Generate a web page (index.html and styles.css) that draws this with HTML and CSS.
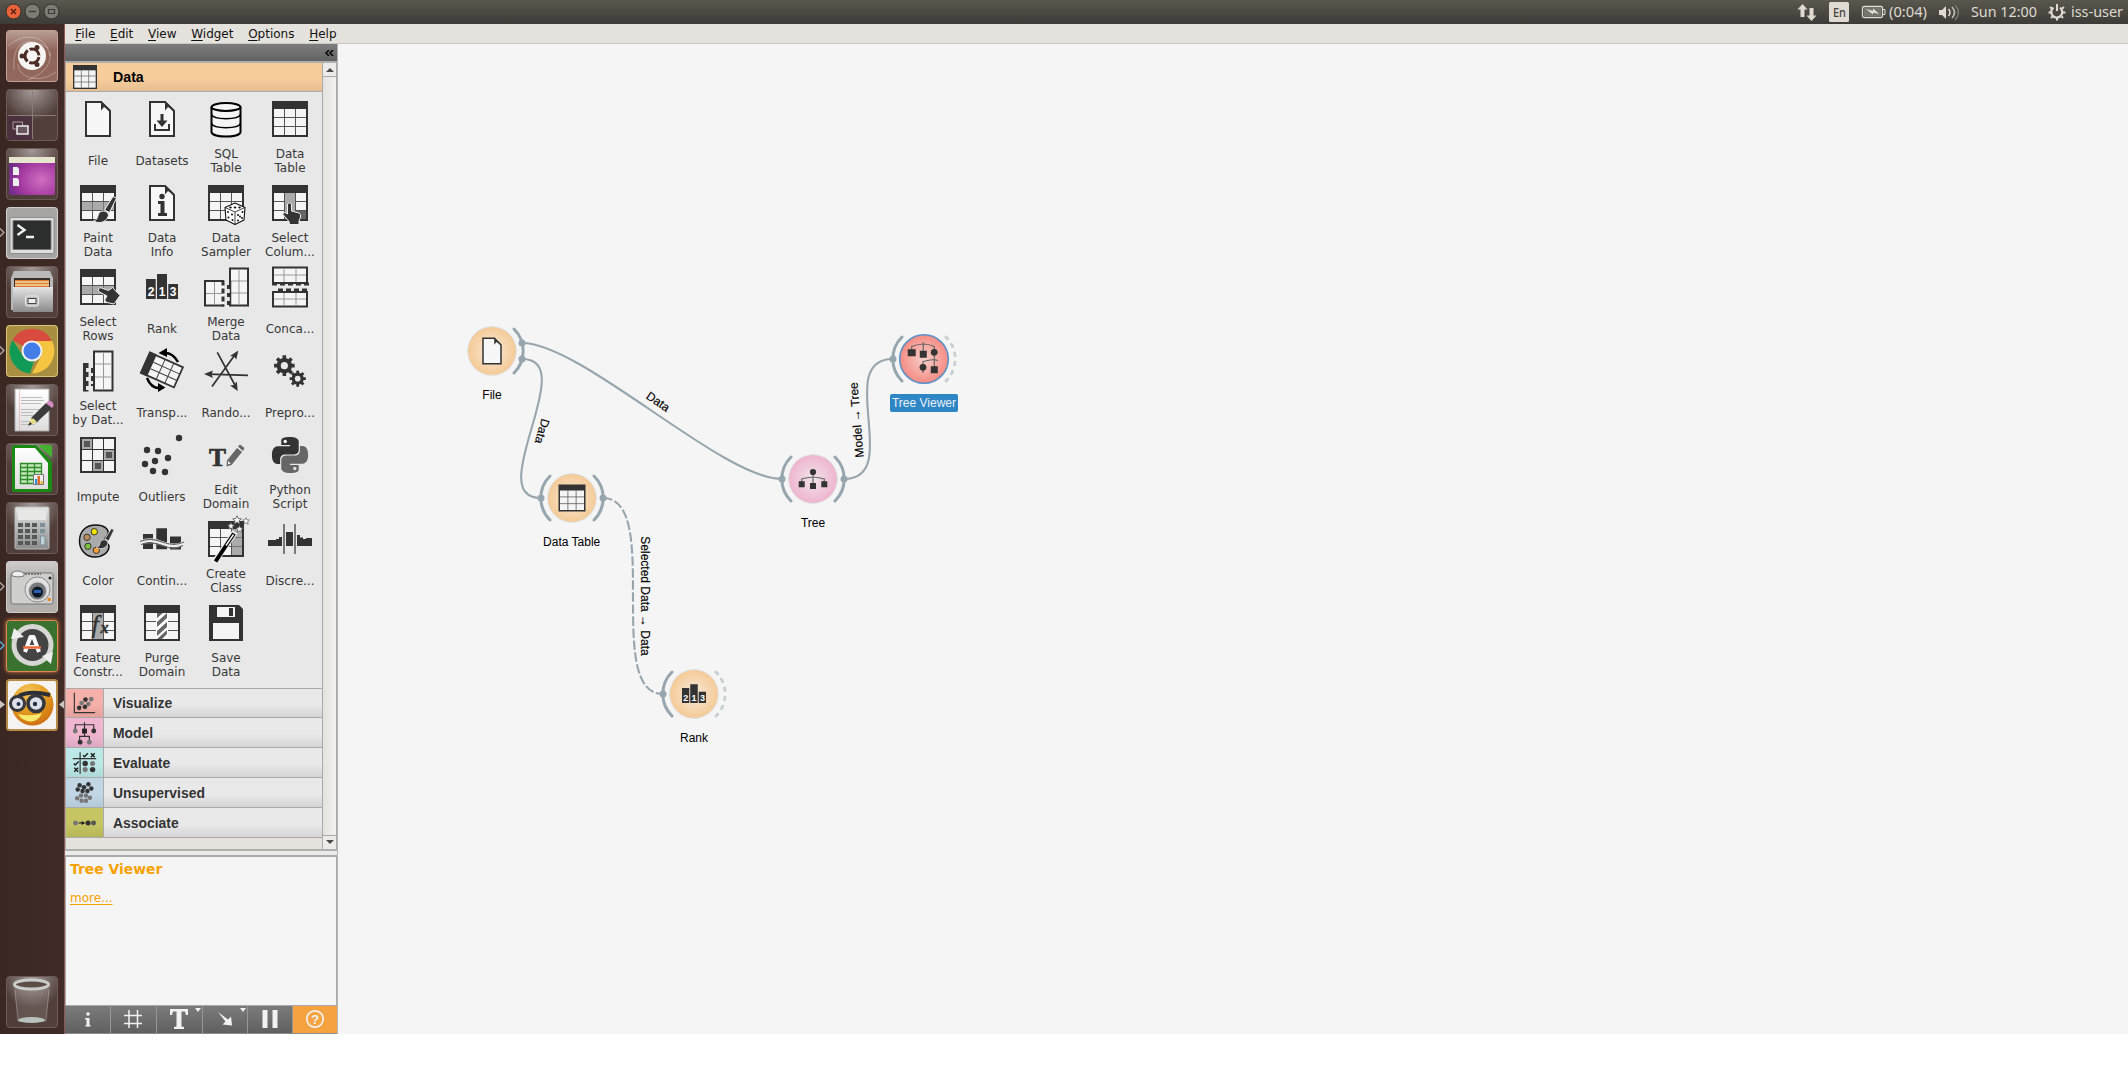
FILE: index.html
```html
<!DOCTYPE html>
<html lang="en">
<head>
<meta charset="utf-8">
<title>Orange Canvas</title>
<link rel="stylesheet" href="styles.css">
</head>
<body>
<svg class="defs" width="0" height="0" aria-hidden="true">
  <defs>
    <linearGradient id="gloss" x1="0" y1="0" x2="0" y2="1"><stop offset="0" stop-color="#fff" stop-opacity=".42"/><stop offset=".4" stop-color="#fff" stop-opacity=".08"/><stop offset="1" stop-color="#fff" stop-opacity=".1"/></linearGradient>
    <radialGradient id="shine" cx=".5" cy="0" r=".62"><stop offset="0" stop-color="#fff" stop-opacity=".48"/><stop offset="1" stop-color="#fff" stop-opacity="0"/></radialGradient>
    <linearGradient id="silver" x1="0" y1="0" x2="0" y2="1"><stop offset="0" stop-color="#e4e4e4"/><stop offset="1" stop-color="#8b8b8b"/></linearGradient>
    <linearGradient id="paper" x1="0" y1="0" x2="0" y2="1"><stop offset="0" stop-color="#fff"/><stop offset="1" stop-color="#dcdcdc"/></linearGradient>
    <radialGradient id="violet" cx=".7" cy=".6" r=".8"><stop offset="0" stop-color="#cf6fc0"/><stop offset=".6" stop-color="#a2389f"/><stop offset="1" stop-color="#682a83"/></radialGradient>
    <radialGradient id="orangeball" cx=".4" cy=".2" r=".9"><stop offset="0" stop-color="#f5c35a"/><stop offset=".5" stop-color="#e39a1e"/><stop offset="1" stop-color="#c9660e"/></radialGradient>
    <radialGradient id="nodeData"><stop offset="0" stop-color="#f6eadb"/><stop offset="1" stop-color="#f5ca96"/></radialGradient>
    <radialGradient id="nodeModel"><stop offset="0" stop-color="#f1e4ea"/><stop offset="1" stop-color="#eeb4cf"/></radialGradient>
    <radialGradient id="nodeViz"><stop offset="0" stop-color="#f7cfcb"/><stop offset="1" stop-color="#f58c83"/></radialGradient>

    <symbol id="table" viewBox="0 0 48 48"><path fill="#333" d="M6 6h36v36H6z"/><path fill="#f5f5f5" d="M8 14h32v26H8z"/><path stroke="#555" d="M18.500 14v26M29.500 14v26M8 22.500h32M8 31.500h32"/></symbol>
    <symbol id="doc" viewBox="0 0 48 48"><path fill="#f7f7f7" stroke="#333" stroke-width="2" d="M12 7h15l9 9v25H12z"/><path fill="#333" d="M27 6v9.500l3-3.500 7 3.500z"/></symbol>
    <symbol id="rank" viewBox="0 0 48 48"><path fill="#333" d="M8 16h9.700v20H8zM19 11h10v25H19zM30.300 21H40v15h-9.700z"/><g fill="#fff" font-family="Liberation Sans, sans-serif" font-weight="bold" font-size="12" text-anchor="middle"><text x="13" y="33">2</text><text x="24" y="33">1</text><text x="35.200" y="33">3</text></g></symbol>
    <symbol id="star" viewBox="-10 -10 20 20"><path fill="#f5f5f5" stroke="#555" stroke-width="1.600" d="M0-8.500 2.600-3 8.500-2.500 4 1.700 5.500 8 0 4.700-5.500 8-4 1.700-8.500-2.500-2.600-3z"/></symbol>
    <symbol id="brush" viewBox="0 0 24 28"><g stroke="#f0f0f0" stroke-width="1"><path fill="#333" d="M20 .5 23.500 2 16.500 16.500 11.500 14z"/><path fill="#333" d="M10.500 15c3 0 5 2 5 4.500-1 4-4 6.500-8 7-3 .3-5-.5-7-1.500 4-1 4-4 5-7 1-2 2.500-3 5-3z"/></g></symbol>
    <symbol id="gear" viewBox="-12 -12 24 24"><circle r="6.300" fill="none" stroke="#333" stroke-width="4.600"/><path stroke="#333" stroke-width="4" d="M0-11.500V-7M0 7v4.500M-11.500 0H-7M7 0h4.500M-8.100-8.100-5-5M5 5l3.100 3.100M-8.100 8.100-5 5M5-5l3.100-3.100"/></symbol>
    <symbol id="tile" viewBox="0 0 52 52"><rect x=".5" y=".5" width="51" height="51" rx="3.500" fill="#fff" fill-opacity=".1" stroke="#fff" stroke-opacity=".2"/><rect x="1" y="1" width="50" height="50" rx="3" fill="url(#shine)"/></symbol>
  </defs>
</svg>

<header class="panel">
  <svg class="window-buttons" width="66" height="24" viewBox="0 0 66 24">
    <circle cx="13.500" cy="11.500" r="7.500" fill="#e9633a" stroke="#33312c"/><path d="m11 9 5 5m0-5-5 5" stroke="#5c2411" stroke-width="1.500"/>
    <circle cx="32.500" cy="11.500" r="7.500" fill="#7d7b74" stroke="#33312c"/><path d="M29 11.500h7" stroke="#3c3b37" stroke-width="1.300"/>
    <circle cx="51.500" cy="11.500" r="7.500" fill="#7d7b74" stroke="#33312c"/><path d="M48.500 9.500h6v4h-6z" fill="none" stroke="#3c3b37" stroke-width="1.200"/>
  </svg>
  <svg class="tray" width="348" height="24" viewBox="0 0 348 24">
    <g fill="#dfdbd2">
      <path d="M22.500 4 27.500 9.500h-3V17h-4V9.500h-3zM31.500 21l-5-5.500h3V8h4v7.500h3z"/>
      <rect x="49" y="2" width="20" height="20" rx="1.500"/>
      <path d="M159 10h3l4-4v13l-4-4h-3z"/>
      <path d="M168.500 9q3 3.500 0 7" fill="none" stroke="#dfdbd2" stroke-width="1.500"/>
      <path d="M172 7q5 5.500 0 11" fill="none" stroke="#c2beb6" stroke-width="1.500"/>
      <path d="M175 5q7 7.500 0 15" fill="none" stroke="#77756e" stroke-width="1.500"/>
    </g>
    <rect x="82.500" y="6.500" width="20" height="11" rx="1.500" fill="none" stroke="#dfdbd2" stroke-width="1.300"/><path d="M103 9.500h2v5h-2" fill="none" stroke="#dfdbd2"/><path fill="#77756e" d="M84 8h17v8H84z"/><path fill="#e8e5de" d="m86 9 7 2V8.500l6 5.500-6-1.500v2z"/>
    <g fill="none" stroke="#dfdbd2"><path stroke-width="2.200" d="M273.500 7.600a5.500 5.500 0 1 0 6.500 0"/><path stroke-width="2" d="M277 4v7M270 7l1.800 1.500M284 7l-1.800 1.500M268.500 12.500h2.500M283 12.500h2.500M271 18l1.500-1.500M283 18l-1.500-1.500M277 18v2.500"/></g>
    <text class="lang" x="53" y="17" textLength="13" lengthAdjust="spacingAndGlyphs">En</text>
    <g class="tray-text">
      <text x="109" y="17" textLength="38" lengthAdjust="spacingAndGlyphs">(0:04)</text>
      <text x="191" y="17" textLength="66" lengthAdjust="spacingAndGlyphs">Sun 12:00</text>
      <text x="291" y="17" textLength="52" lengthAdjust="spacingAndGlyphs">iss-user</text>
    </g>
  </svg>
</header>

<div class="desktop">
<nav class="launcher">
  <svg class="app" viewBox="0 0 52 52"><rect width="52" height="52" rx="4" fill="#87584b"/><rect x=".5" y=".5" width="51" height="51" rx="3.500" fill="url(#gloss)" stroke="#c3a094"/><path d="M2 16C18 2 40 4 44 26M8 40C6 10 22 6 42 18M12 34c0 14 22 20 38 8M44 22c2 14-8 22-22 28" fill="none" stroke="#fff" stroke-opacity=".3"/><circle cx="26" cy="26" r="14" fill="#f7f5f3"/><circle cx="26" cy="26" r="7" fill="none" stroke="#4a2c25" stroke-width="3" stroke-dasharray="12.660 2" stroke-dashoffset="-1"/><g fill="#4a2c25"><circle cx="16" cy="26" r="2.500"/><circle cx="31" cy="17.500" r="2.500"/><circle cx="31" cy="34.500" r="2.500"/></g></svg>
  <svg class="app" viewBox="0 0 52 52"><use href="#tile"/><path fill="#4a2c40" fill-opacity=".7" d="M1 27h25v24H1z"/><path stroke="#8a7b75" d="M26.500 2v48M2 26.500h48"/><path d="M7 33h9.500v7H7z" fill="none" stroke="#a99ca5"/><path d="M11 37h11v8H11z" fill="#6b5561" stroke="#eee" stroke-width="1.500"/></svg>
  <svg class="app" viewBox="0 0 52 52"><use href="#tile"/><rect x="3" y="9" width="46" height="38" rx="1" fill="url(#violet)"/><path fill="#e6e6cf" d="M3 9h46v6H3z"/><path fill="#eee" d="M7 19h4.500l1.500 2v6H7zM7 30h4.500l1.500 2v6H7z"/></svg>
  <svg class="app" viewBox="0 0 52 52"><rect width="52" height="52" rx="4" fill="#a6a5a4"/><rect x=".5" y=".5" width="51" height="51" rx="3.500" fill="none" stroke="#cfcfcf"/><rect x="4" y="10.500" width="44" height="36" rx="1.500" fill="#dedede" stroke="#8a8a8a"/><path fill="#2c2e2e" stroke="#777" d="M7 13.500h38v29H7z"/><path fill="none" stroke="#f1f1f1" stroke-width="2.400" d="m11.500 18 7 5-7 5M20 30h8"/></svg>
  <svg class="app" viewBox="0 0 52 52"><use href="#tile"/><path fill="#b9b9b9" d="M8 5h36l3 7v32H5V12z"/><path fill="#33302e" d="M8 12h36v9H8z"/><path fill="#dd7a34" d="M9 14h34v7H9z"/><path stroke="#f3d8a0" stroke-width="1.500" d="M9 16h34M9 19h34"/><path fill="url(#silver)" d="M7 21h40v25H7z"/><rect x="19.500" y="30" width="13" height="10" rx="2" fill="#bbb" stroke="#eee"/><path fill="#eee" stroke="#444" d="M22 32.500h8v5h-8z"/></svg>
  <svg class="app" viewBox="0 0 52 52"><rect width="52" height="52" rx="4" fill="#a88e40"/><rect x=".5" y=".5" width="51" height="51" rx="3.500" fill="none" stroke="#d8c579"/><path fill="#d84b3e" d="M26 26 6.500 15A22.500 22.500 0 0 1 45.500 15z"/><path fill="#f5c541" d="M26 16h20A22.500 22.500 0 0 1 26 48.500l9.500-18z"/><path fill="#129b57" d="M6.500 15 17 31l11 5-4 12.500A22.500 22.500 0 0 1 6.500 15z"/><circle cx="26" cy="26" r="10.500" fill="#f1f1f1"/><circle cx="26" cy="26" r="8.500" fill="#447de8"/></svg>
  <svg class="app" viewBox="0 0 52 52"><use href="#tile"/><path fill="url(#paper)" stroke="#aaa" d="M9 5h34v42H9z"/><path stroke="#bbb" d="M15 13.500h21M15 16.500h23M15 19.500h20M15 25.500h20M15 28.500h12M15 31.500h12M15 37.500h18M15 40.500h14"/><path stroke="#e8a4a4" stroke-opacity=".6" d="M13.500 6v40"/><path fill="#3b3b3b" d="m40 19 6 5-16 15-5-5z"/><path fill="#d58ac4" d="m40 19 3-2.500q5 1 4.500 5.500L46 24z"/><path fill="#e8dd8c" d="m25 34 5 5-6 1.500-1.500-1z"/><path fill="#e8dd8c" d="m23 41 4-7 4 4z"/><path fill="#222" d="m22 42 2-4 2 2z"/></svg>
  <svg class="app" viewBox="0 0 52 52"><use href="#tile"/><path fill="#1a8a13" d="M8 2h22l16 17v28q0 2-2 2H8q-2 0-2-2V4q0-2 2-2z"/><path fill="#45b02f" d="M32 2h12q2 0 2 2v11z"/><path fill="url(#paper)" d="M9 5h20l13 15v26H9z"/><path fill="#c4e6bb" stroke="#2c8c25" stroke-width="1.300" d="M14.500 20.500h21v20h-21zM14.500 24.500h21M14.500 28.500h21M14.500 32.500h21M14.500 36.500h21M21.500 20v20M28.500 20v20"/><path fill="#eee" stroke="#777" d="M27.500 31.500h10v10h-10z"/><path fill="#2c90d8" d="M29 36h2.300v5H29z"/><path fill="#e2682b" d="M31.500 33H34v8h-2.500z"/><path fill="#e7b927" d="M34.500 38h2.300v3h-2.300z"/></svg>
  <svg class="app" viewBox="0 0 52 52"><use href="#tile"/><rect x="9" y="5" width="34" height="42" rx="1.500" fill="url(#silver)" stroke="#bbb"/><path fill="#e7e8e5" d="M12 8h28v10H12z"/><path stroke="#555856" stroke-width="4" stroke-dasharray="5 2" d="M12 23h20M12 29h20M12 35h20M12 41h20"/><path stroke="#7d8f97" stroke-width="4" d="M34 23h5M34 29h5"/><path fill="#c0d0d6" stroke="#7d8f97" d="M34.500 34h4.500v9h-4.500z"/></svg>
  <svg class="app" viewBox="0 0 52 52"><rect width="52" height="52" rx="4" fill="#aaa6a3"/><rect x=".5" y=".5" width="51" height="51" rx="3.500" fill="url(#gloss)" stroke="#cfcdcb"/><rect x="5" y="12" width="42" height="31" rx="2" fill="#cfcfcd" stroke="#747472"/><path fill="#eee" stroke="#777" d="M6 12q5-4 12 0v3q-6 2-12 0z"/><path stroke="#777" stroke-width="2" stroke-dasharray="2 1" d="M19 13h16"/><circle cx="31.500" cy="28.500" r="12.500" fill="#e2e2e2" stroke="#888"/><circle cx="31.500" cy="30" r="9" fill="#777a7c" stroke="#ccc"/><circle cx="31.500" cy="31" r="5.500" fill="#0b1826"/><path fill="#2b62b5" d="M28 29h7v3h-7z"/><circle cx="44" cy="17" r="1.500" fill="#222"/><path fill="#e8902c" d="M41.500 37h3.500v3h-3.500z"/></svg>
  <svg class="app app-urgent" viewBox="0 0 52 52"><rect x=".5" y=".5" width="51" height="51" rx="3" fill="#38722e" stroke="#dc8a52"/><circle cx="26.500" cy="25" r="18.500" fill="#444" stroke="#d6d6d3" stroke-width="5"/><path fill="#eee" d="M5 19 8 8l10 9zM36 36l11-4-2 12z"/><path fill="none" stroke="#fff" stroke-width="4" stroke-linejoin="round" d="M19 32 24.500 17h3L33 32M21 27h10"/><path stroke="#eb6a37" stroke-width="2.500" d="M17 27.500h18"/></svg>
  <svg class="app" viewBox="0 0 52 52"><rect x="1" y="1" width="50" height="50" rx="2.500" fill="#f4f3f2" stroke="#b58b45" stroke-width="2"/><circle cx="26.500" cy="25.500" r="21" fill="url(#orangeball)"/><path fill="#f8e96e" d="M12 35q13 3 24-1-4 9-12 8.500Q16 42 12 35z"/><path d="M13 17q10-6 31-1" fill="none" stroke="#2c2f35" stroke-width="4"/><circle cx="11.500" cy="24.500" r="7" fill="#dde0e8" stroke="#34373e" stroke-width="3"/><circle cx="30" cy="24.500" r="8" fill="#dde0e8" stroke="#34373e" stroke-width="3.500"/><circle cx="12.500" cy="25" r="2" fill="#22304a"/><circle cx="29" cy="25" r="2.200" fill="#22304a"/></svg>
  <svg class="app trash" viewBox="0 0 52 52"><use href="#tile"/><path fill="#fff" fill-opacity=".12" d="M8 12h36l-4 34H12z"/><path stroke="#fff" stroke-opacity=".25" d="m9 14 3 31M43 14l-3 31"/><ellipse cx="25.500" cy="44" rx="13.500" ry="3" fill="#b9c2bd"/><ellipse cx="25.500" cy="8.500" rx="17" ry="4.500" fill="#5c4d47" stroke="#c9cdca" stroke-width="3"/></svg>
  <svg class="markers" width="65" height="1010" viewBox="0 24 65 1010"><g fill="none" stroke="#b5aaa5" stroke-width="1.300"><path d="m0 228.500 4 4-4 4M0 346.500l4 4-4 4M0 582.500l4 4-4 4"/><path stroke="#5eb5dc" d="m0 641.500 4 4-4 4"/></g><path fill="#ccc6c3" d="m0 700.500 5 4-5 4zM64 700.500l-5 4 5 4z"/></svg>
</nav>

<main class="window">
  <div class="menubar"><span><u>F</u>ile</span><span><u>E</u>dit</span><span><u>V</u>iew</span><span><u>W</u>idget</span><span><u>O</u>ptions</span><span><u>H</u>elp</span></div>
  <div class="workspace">
  <aside class="dock">
    <div class="dock-title"><svg width="9" height="6" viewBox="0 0 9 6"><path d="M4 0 1 3l3 3M8 0 5 3l3 3" fill="none" stroke="#000" stroke-width="1.500"/></svg></div>
    <div class="toolbox">
      <div class="categories">
        <div class="category-open"><svg class="cat-table" viewBox="6 6 36 36"><use href="#table" width="48" height="48"/></svg><b>Data</b></div>
        <div class="widgets">
          <div class="widget"><svg viewBox="0 0 48 48"><use href="#doc"/></svg><span>File</span></div>
          <div class="widget"><svg viewBox="0 0 48 48"><use href="#doc"/><path fill="#333" d="M22.500 19h3v6.500h4L24 32l-5.500-6.500h4z"/><path fill="none" stroke="#333" stroke-width="2" d="M17 29v6h14v-6"/></svg><span>Datasets</span></div>
          <div class="widget"><svg viewBox="0 0 48 48"><path fill="#f5f5f5" stroke="#000" stroke-width="2" d="M9.500 12v25c1 6 28 6 29 0V12"/><ellipse cx="24" cy="12" rx="14.500" ry="4" fill="#f5f5f5" stroke="#000" stroke-width="2"/><path fill="none" stroke="#000" stroke-width="1.500" d="M9.500 19.500c2 5.500 27 5.500 29 0M9.500 28.500c2 5.500 27 5.500 29 0"/></svg><span>SQL<br>Table</span></div>
          <div class="widget"><svg viewBox="0 0 48 48"><use href="#table"/></svg><span>Data<br>Table</span></div>

          <div class="widget"><svg viewBox="0 0 48 48"><use href="#table"/><path fill="#aaa" d="M8 23h32v8H8z"/><path stroke="#777" d="M18.500 23v8M29.500 23v8"/><use href="#brush" x="19" y="17" width="24" height="28"/></svg><span>Paint<br>Data</span></div>
          <div class="widget"><svg viewBox="0 0 48 48"><use href="#doc"/><circle cx="24" cy="17.500" r="2.700" fill="#333"/><path fill="#333" d="M20 22h6.500v12H29v3h-9v-3h2.500v-9H20z"/></svg><span>Data<br>Info</span></div>
          <div class="widget"><svg viewBox="0 0 48 48"><use href="#table"/><path fill="#fff" stroke="#111" stroke-width="1.100" stroke-linejoin="round" d="m33 24 10 4.500-1 12.500-9 4.500-9-4.500-1-12.500z"/><path fill="none" stroke="#111" stroke-width=".8" d="m23 28.500 10 4.500 10-4.500M33 33v12"/><g fill="#111"><ellipse cx="28.500" cy="28.500" rx="1.300" ry=".9"/><ellipse cx="33" cy="28.500" rx="1.300" ry=".9"/><ellipse cx="37.500" cy="28.500" rx="1.300" ry=".9"/><circle cx="26" cy="33" r="1"/><circle cx="30" cy="35.500" r="1"/><circle cx="26.500" cy="38.500" r="1"/><circle cx="30.500" cy="41" r="1"/><circle cx="36" cy="36" r="1"/><circle cx="40.500" cy="33" r="1"/><circle cx="38" cy="37.500" r="1"/><circle cx="36" cy="41.500" r="1"/><circle cx="40" cy="39" r="1"/></g></svg><span>Data<br>Sampler</span></div>
          <div class="widget"><svg viewBox="0 0 48 48"><use href="#table"/><path fill="#aaa" d="M19 14h10v26H19z"/><path fill="#666" d="M30 32h10v8H30z"/><path fill="#333" stroke="#f0f0f0" d="M21.500 25q2-2.500 4 0v7l7.500 2q2 1 1.500 4L33 42v3.500h-9.500l-.5-3-6-7q0-3 3-1.500l1.500 1z"/></svg><span>Select<br>Colum...</span></div>

          <div class="widget"><svg viewBox="0 0 48 48"><use href="#table"/><path fill="#aaa" d="M8 23h32v8H8z"/><path stroke="#777" d="M18.500 23v8M29.500 23v8"/><path fill="#333" stroke="#f0f0f0" d="M24.500 26q1-2 3-1l7 2.500 4-3 7.500 8-6 8.500-7-1.500q-3-1.500-2-3l2-3.500-7.500-4q-1.500-1-1-3z"/></svg><span>Select<br>Rows</span></div>
          <div class="widget"><svg viewBox="0 0 48 48"><use href="#rank"/></svg><span>Rank</span></div>
          <div class="widget"><svg viewBox="0 0 48 48"><path fill="#f5f5f5" stroke="#333" stroke-width="2" d="M22 18H3v24.500h19"/><path stroke="#999" d="M12.500 19v23M4 30.500h16"/><path stroke="#333" stroke-width="3" stroke-dasharray="5 3" d="M21 17.500v26"/><path fill="#f5f5f5" stroke="#333" stroke-width="2" d="M28 22V5.500h18v37H28V38"/><path stroke="#999" d="M37 6v36M29 18h16M29 30h16"/><path stroke="#333" stroke-width="3" stroke-dasharray="4 4" d="M26.500 22v20"/><path stroke="#333" stroke-width="1.500" d="M28.500 18v24"/></svg><span>Merge<br>Data</span></div>
          <div class="widget"><svg viewBox="0 0 48 48"><path fill="#f5f5f5" stroke="#333" stroke-width="2" d="M7 20V4.500h34V20zM7 29v14.500h34V29z"/><path stroke="#999" d="M18 5v14M30 5v14M8 12h32M18 30v13M30 30v13M8 36h32"/><path stroke="#333" stroke-width="3" stroke-dasharray="5 3" d="M6 21h37M12 27h30"/></svg><span>Conca...</span></div>

          <div class="widget"><svg viewBox="0 0 48 48"><path fill="#f5f5f5" stroke="#333" stroke-width="2" d="M20 22V4.500h18.500v39H20z"/><path stroke="#999" d="M29.500 5v38M21 17h17M21 30h17"/><path stroke="#333" stroke-width="3" stroke-dasharray="5 3" d="M18.500 21v18"/><path stroke="#333" stroke-width="3" d="M10.500 16v28.500"/><path stroke="#333" stroke-width="3" stroke-dasharray="5 4" d="M13 16v28.500"/></svg><span>Select<br>by Dat...</span></div>
          <div class="widget"><svg viewBox="0 0 48 48"><g transform="rotate(24 24 23)"><path fill="#f5f5f5" stroke="#333" stroke-width="1.800" d="M6 12h36v22H6z"/><path fill="#333" d="M5 11h8v24H5z"/><path stroke="#444" d="M22.500 12v22M32 12v22M13 19.500h29M13 26.500h29"/></g><g fill="none" stroke="#000" stroke-width="2.500"><path d="M27 6q8 0 13 9M21 41q-8 0-12-10"/></g><path d="M20.500 6 29 1v9zM27.500 40.500 20 45v-9z"/></svg><span>Transp...</span></div>
          <div class="widget"><svg viewBox="0 0 48 48"><path stroke="#333" stroke-width="1.700" d="M15.300 5.300 34 40M10 39.500 33.500 7M46 28.300 6 27.100"/><path fill="#333" d="m35.700 44-7.700-5.500 4-.5 2.800-3.500zM36.300 3.500l-2 9-2.300-3-4-.5zM2 27l9-3.500-1.500 3.700L11 31z"/></svg><span>Rando...</span></div>
          <div class="widget"><svg viewBox="0 0 48 48"><use href="#gear" x="7.600" y="7.900" width="21.500" height="21.500"/><use href="#gear" x="23.200" y="23.200" width="17" height="17"/></svg><span>Prepro...</span></div>

          <div class="widget"><svg viewBox="0 0 48 48"><path fill="#f5f5f5" stroke="#333" stroke-width="2" d="M7 7h34v34H7z"/><path fill="#aaa" d="M8 8h10v10H8zM30 19h10v10H30zM19 30h10v10H19z"/><path stroke="#333" d="M18.500 8v32M29.500 8v32M8 18.500h32M8 29.500h32"/><path fill="#555" d="M10 10h6v6h-6zM32 21h6v6h-6zM21 32h6v6h-6z"/></svg><span>Impute</span></div>
          <div class="widget"><svg viewBox="0 0 48 48"><g fill="#333"><circle cx="41" cy="7" r="3.200"/><circle cx="9" cy="19" r="3.200"/><circle cx="20" cy="20" r="3.200"/><circle cx="30" cy="27" r="3.200"/><circle cx="17" cy="30" r="3.200"/><circle cx="7" cy="33" r="3.200"/><circle cx="15" cy="40" r="3.200"/><circle cx="27" cy="41" r="3.200"/></g></svg><span>Outliers</span></div>
          <div class="widget"><svg viewBox="0 0 48 48"><text x="7" y="35" fill="#333" stroke="#333" stroke-width=".7" font-family="Liberation Serif, serif" font-weight="bold" font-size="26" textLength="17" lengthAdjust="spacingAndGlyphs">T</text><path fill="#666" d="m35 17 5 4-10.500 13-5 1.500.5-6z"/><path fill="#666" d="m36 15.500 2-2 4.500 3.500-1.500 3z"/><path fill="#eee" d="m26 30 3 2.500-3 1z"/></svg><span>Edit<br>Domain</span></div>
          <div class="widget"><svg viewBox="0 0 48 48"><g transform="translate(6 6) scale(1.500)"><path fill="#333" d="M14.250.18l.9.2.73.26.59.3.45.32.34.34.25.34.16.33.1.3.04.26.02.2-.01.13V8.500l-.05.63-.13.55-.21.46-.26.38-.3.31-.33.25-.35.19-.35.14-.33.1-.3.07-.26.04-.21.02H8.770l-.69.05-.59.14-.5.22-.41.27-.33.32-.27.35-.2.36-.15.37-.1.35-.07.32-.04.27-.02.21v3.060H3.170l-.21-.03-.28-.07-.32-.12-.35-.18-.36-.26-.36-.36-.35-.46-.32-.59-.28-.73-.21-.88-.14-1.050-.05-1.230.06-1.220.16-1.040.24-.87.32-.71.36-.57.4-.44.42-.33.42-.24.4-.16.36-.1.32-.05.24-.01h.16l.06.01h8.160v-.83H6.180l-.01-2.750-.02-.37.05-.34.11-.31.17-.28.25-.26.31-.23.38-.2.44-.18.51-.15.58-.12.64-.1.71-.06.77-.04.84-.02 1.270.05z"/><path fill="#666" transform="rotate(180 12 12)" d="M14.250.18l.9.2.73.26.59.3.45.32.34.34.25.34.16.33.1.3.04.26.02.2-.01.13V8.500l-.05.63-.13.55-.21.46-.26.38-.3.31-.33.25-.35.19-.35.14-.33.1-.3.07-.26.04-.21.02H8.770l-.69.05-.59.14-.5.22-.41.27-.33.32-.27.35-.2.36-.15.37-.1.35-.07.32-.04.27-.02.21v3.060H3.170l-.21-.03-.28-.07-.32-.12-.35-.18-.36-.26-.36-.36-.35-.46-.32-.59-.28-.73-.21-.88-.14-1.050-.05-1.230.06-1.220.16-1.040.24-.87.32-.71.36-.57.4-.44.42-.33.42-.24.4-.16.36-.1.32-.05.24-.01h.16l.06.01h8.160v-.83H6.180l-.01-2.750-.02-.37.05-.34.11-.31.17-.28.25-.26.31-.23.38-.2.44-.18.51-.15.58-.12.64-.1.71-.06.77-.04.84-.02 1.270.05z"/><circle cx="8.800" cy="3" r="1.100" fill="#fff"/><circle cx="15.200" cy="21" r="1.100" fill="#ddd"/></g></svg><span>Python<br>Script</span></div>

          <div class="widget"><svg viewBox="0 0 48 48"><path fill="#aaa" stroke="#111" stroke-width="1.500" d="M22 10c8 0 13 4 12 9-1 4-5 4-4 7 1 2 5 2 5 5 0 7-7 11-14 11C11 42 5.500 34 5.500 26 5.500 16 12 10 22 10z"/><g stroke="#333"><circle cx="20.300" cy="16.700" r="3.200" fill="#f2e500"/><circle cx="13" cy="22.300" r="3.200" fill="#bd8d5c"/><circle cx="14" cy="31.300" r="3.200" fill="#7fbf3f"/><circle cx="22.300" cy="35.300" r="3.200" fill="#f59e33"/></g><use href="#brush" x="22" y="12" width="18.500" height="24"/></svg><span>Color</span></div>
          <div class="widget"><svg viewBox="0 0 48 48"><path fill="#333" d="M5 19h10v15H5zM18.300 13.300H29v21H18.300zM32 21.500h11v13H32z"/><path fill="none" stroke="#eee" stroke-width="4" d="M2 27.500C10 24 16 25 24 28s15 4 22 0"/><path fill="none" stroke="#666" stroke-width="1.300" d="M2 26.500C10 23 16 24 24 27s15 3.500 22 0M3 29.500c8-3 14-2 21 1s14 4 21 0"/></svg><span>Contin...</span></div>
          <div class="widget"><svg viewBox="0 0 48 48"><use href="#table"/><path fill="#aaa" d="M30 14h10v26H30z"/><path stroke="#777" d="M30 22.500h10M30 31.500h10"/><path stroke="#eee" stroke-width="6" d="M12 48 33 17"/><path stroke="#000" stroke-width="4" d="M13.500 46.500 32 18.500"/><path stroke="#eee" stroke-width="1.500" d="m24 30.500 7.500-11"/><use href="#star" x="30" y="0" width="10" height="10"/><use href="#star" x="40" y="2" width="8" height="8"/><use href="#star" x="25" y="7" width="8" height="8"/><use href="#star" x="33.500" y="10" width="8" height="8"/></svg><span>Create<br>Class</span></div>
          <div class="widget"><svg viewBox="0 0 48 48"><path fill="#333" d="M2 25h8v-1h3v-2h3v9H2zM20 17h7v14h-7zM31 20h3v2.500h3V24h3v-1h6v8H31z"/><path stroke="#666" stroke-width="1.700" d="M18 9v30M29 9v30"/></svg><span>Discre...</span></div>

          <div class="widget"><svg viewBox="0 0 48 48"><use href="#table"/><path fill="#aaa" d="M19 14h10v26H19z"/><g fill="#333" stroke="#333" stroke-width=".5" font-family="Liberation Serif, serif" font-style="italic"><text x="17.500" y="33.500" font-size="26">f</text><text x="26.500" y="34" font-size="16" font-weight="bold">x</text></g></svg><span>Feature<br>Constr...</span></div>
          <div class="widget"><svg viewBox="0 0 48 48"><use href="#table"/><path fill="#fff" d="M18 14h12v26H18z"/><path fill="#666" d="M19 19v-5h6zM19 28v-5l10-9v5zM19 37v-5l10-9v5zM22 40h-3l10-9v-1 5l-5 5z"/></svg><span>Purge<br>Domain</span></div>
          <div class="widget"><svg viewBox="0 0 48 48"><path fill="#333" d="M7 6h30l4 4v32H7z"/><path fill="#f5f5f5" d="M15 8h18v10H15zM11 24h26v16H11z"/><path fill="#333" d="M27 9h4v8h-4z"/></svg><span>Save<br>Data</span></div>
        </div>
        <div class="category viz"><svg viewBox="0 0 38 29"><path fill="none" stroke="#333" stroke-width="1.200" d="M8.500 4v20.500H30"/><g fill="#333"><circle cx="20" cy="11" r="2.400"/><circle cx="19.500" cy="18.500" r="2.400"/><circle cx="13.500" cy="19.500" r="2.400"/></g><g fill="#777"><circle cx="26" cy="10.500" r="2.400"/><circle cx="16" cy="14.500" r="2.400"/><circle cx="23" cy="15.500" r="2.400"/></g></svg><b>Visualize</b></div>
        <div class="category model"><svg viewBox="0 0 38 29"><path fill="none" stroke="#333" stroke-width="1.200" d="M9.500 11V6.500h19V12M19 4v15M14 23v-4.500h10V23"/><path fill="#222" d="M16.500 10.500h5v5h-5z"/><g fill="#333"><circle cx="28.500" cy="13" r="2.500"/><circle cx="14.500" cy="24.500" r="2.500"/></g><g fill="#777"><circle cx="9.500" cy="13" r="2.500"/><circle cx="24" cy="24.500" r="2.500"/></g></svg><b>Model</b></div>
        <div class="category evaluate"><svg viewBox="0 0 38 29"><path fill="none" stroke="#333" stroke-width="1.200" d="M14.500 4v22M7 10.500h24"/><path fill="none" stroke="#222" stroke-width="1.500" d="m17.500 7 1.500 1.500 3.500-3.500M25.500 5l4 4m0-4-4 4M8 15.500 9.500 17l3.500-3.500M8.500 20l4 4m0-4-4 4"/><g fill="#333"><circle cx="19.700" cy="15.500" r="2.800"/><circle cx="27.300" cy="21.800" r="2.800"/></g><g fill="#777"><circle cx="27.300" cy="15.500" r="2.600"/><circle cx="19.700" cy="21.800" r="2.600"/></g></svg><b>Evaluate</b></div>
        <div class="category unsup"><svg viewBox="0 0 38 29"><g fill="#333"><circle cx="14" cy="7" r="2.300"/><circle cx="23" cy="6" r="2.300"/><circle cx="18.500" cy="9" r="2.300"/><circle cx="12" cy="11.500" r="2.300"/><circle cx="26" cy="10.500" r="2.300"/><circle cx="17" cy="13" r="2.300"/><circle cx="22" cy="13" r="2.300"/></g><g fill="#777"><circle cx="15.500" cy="17.500" r="2.300"/><circle cx="20.500" cy="17.500" r="2.300"/><circle cx="11.500" cy="20.500" r="2.300"/><circle cx="24.500" cy="20" r="2.300"/><circle cx="16" cy="23" r="2.300"/><circle cx="20.500" cy="23" r="2.300"/></g></svg><b>Unsupervised</b></div>
        <div class="category assoc"><svg viewBox="0 0 38 29"><path fill="none" stroke="#222" stroke-width="1.200" d="M13 15h4"/><path fill="#222" d="m16 13 4 2-4 2z"/><circle cx="9.800" cy="15" r="2.500" fill="#777"/><circle cx="22.700" cy="15" r="2.600" fill="#333"/><circle cx="28.300" cy="15" r="2.500" fill="#555"/></svg><b>Associate</b></div>
      </div>
      <div class="scrollbar"><i class="up"></i><i class="down"></i></div>
    </div>
    <div class="splitter"></div>
    <div class="help"><h1>Tree Viewer</h1><a href="#more">more...</a></div>
    <div class="toolbar">
      <span><svg viewBox="0 0 44 27"><circle cx="22.500" cy="8" r="1.800"/><path d="M19.500 12h4.500v7h1v1.500h-5V19h1v-5.500h-1.500z"/></svg></span>
      <span><svg viewBox="0 0 45 27"><path fill="none" stroke="#f2f2f2" stroke-width="1.500" d="M18 4v18M26.500 4v18M13 9.500h18M13 17.500h18"/></svg></span>
      <span><svg viewBox="0 0 45 27"><path d="M13 3h18v6h-2l-1-3.500h-3.500v15L27 21v2H17v-2l2.500-.5v-15H16L15 9h-2zM38 2h6l-3 4z"/></svg></span>
      <span><svg viewBox="0 0 44 27"><path d="m15 6 10 7.500 3-3 1 9-9.500-1 3-3zM37 2h6l-3 4z"/></svg></span>
      <span><svg viewBox="0 0 44 27"><path d="M14.500 4h5v18h-5zM24.500 4h5v18h-5z"/></svg></span>
      <span class="active"><svg viewBox="0 0 44 27"><circle cx="22" cy="13" r="8.200" fill="none" stroke="#f2f2f2" stroke-width="1.700"/><text x="22" y="17.700" text-anchor="middle" font-family="Liberation Sans, sans-serif" font-weight="bold" font-size="13.500">?</text></svg></span>
    </div>
  </aside>

  <svg class="canvas" width="1790" height="990" viewBox="338 44 1790 990">
    <g fill="none" stroke="#97a6ae" stroke-width="2.100">
      <path d="M522 343C582 343 722 479 782 479M522 359C582 359 481 498 541 498M844 479C904 479 833 359 893 359"/>
      <path stroke-dasharray="9.500 2.500" d="M603 498C663 498 603 694 663 694"/>
    </g>
    <g fill="none" stroke="#97a6ae" stroke-width="3" stroke-linecap="round">
      <path d="M514 329a31 31 0 0 1 0 44M550 476a31 31 0 0 0 0 44M594 476a31 31 0 0 1 0 44M791 457a31 31 0 0 0 0 44M835 457a31 31 0 0 1 0 44M902 337a31 31 0 0 0 0 44M672 672a31 31 0 0 0 0 44"/>
      <path stroke="#c6cfd3" stroke-dasharray="2.500 6.740" d="M946 337a31 31 0 0 1 0 44M716 672a31 31 0 0 1 0 44"/>
    </g>
    <g fill="#97a6ae"><circle cx="522" cy="343" r="3.500"/><circle cx="522" cy="359" r="3.500"/><circle cx="541" cy="498" r="3.500"/><circle cx="603" cy="498" r="3.500"/><circle cx="782" cy="479" r="3.500"/><circle cx="844" cy="479" r="3.500"/><circle cx="893" cy="359" r="3.500"/><circle cx="663" cy="694" r="3.500"/></g>
    <g stroke="#dedfdf">
      <circle cx="492" cy="351" r="24.300" fill="url(#nodeData)"/><circle cx="572" cy="498" r="24.300" fill="url(#nodeData)"/><circle cx="694" cy="694" r="24.300" fill="url(#nodeData)"/>
      <circle cx="813" cy="479" r="24.300" fill="url(#nodeModel)"/><circle cx="924" cy="359" r="24.300" fill="url(#nodeViz)" stroke="#5b92c8" stroke-width="1.600"/>
    </g>
    <use href="#doc" x="474" y="333" width="36" height="36"/>
    <use href="#table" x="554" y="480" width="36" height="36"/>
    <use href="#rank" x="676" y="676" width="36" height="36"/>
    <g transform="translate(813 479)"><path fill="none" stroke="#666" stroke-width="1.200" d="M0-7V7M-11.300 5V0Q-6-1.500 0-2 6-1.500 11.300 0v5"/><circle cy="-7" r="3.100" fill="#333"/><path fill="#333" d="M-14.300 2.300h6v6h-6zM-3 4h6v6h-6zM8.300 2.300h6v6h-6z"/></g>
    <g transform="translate(924 359)"><path fill="none" stroke="#666" stroke-width="1.200" d="M-.7-16.700V-5M-12.300-7v-5.500Q-6-15-.7-15 5-15 10.300-12.500V8M-1 14V2.500Q5 1 10 .5l4 1"/><path fill="#333" d="M-16.300-9.800h8v7h-8zM-4.200-8.200h7v7h-7zM6.800 7.200h7v7h-7z"/><circle cx="10.200" cy="-6.700" r="3.400" fill="#333"/><circle cx="-1" cy="8.300" r="3.400" fill="#333"/></g>
    <rect x="890" y="394" width="68" height="18" rx="2" fill="#2f86c4"/>
    <g class="node-label">
      <text x="492" y="399">File</text><text x="571.700" y="546">Data Table</text><text x="813" y="527">Tree</text><text x="694" y="742">Rank</text><text class="selected" x="924" y="407">Tree Viewer</text>
      <g class="link-label">
        <text transform="translate(652.500 410) rotate(34)" y="-6">Data</text>
        <text transform="translate(532.500 428.500) rotate(106)" y="-6">Data</text>
        <text transform="translate(867.500 419) rotate(-94.800)" y="-7">Model → Tree</text>
        <text transform="translate(633.300 596) rotate(90)" y="-7.500">Selected Data → Data</text>
      </g>
    </g>
  </svg>
  </div>
</main>
</div>
</body>
</html>
```
FILE: styles.css
```css
* { box-sizing: border-box; }
body { margin: 0; background: #fff; font: 12px/14px "DejaVu Sans", sans-serif; color: #333; }
svg { display: block; }
.defs { position: absolute; }

.panel { display: flex; justify-content: space-between; height: 24px; background: linear-gradient(#5a574e, #3d3b37); }
.tray-text, .lang { font-family: "Noto Sans", "Open Sans", sans-serif; font-size: 14px; fill: #dfdbd2; }
.lang { fill: #46443f; font-size: 12.5px; font-weight: 500; }

.desktop { display: flex; height: 1010px; }

.launcher { position: relative; display: flex; flex-direction: column; gap: 7px; width: 65px; padding: 6px 0 6px 6px; background: linear-gradient(90deg, #3a2722, #402b26); border-right: 1px solid #8b5a52; }
.app { width: 52px; height: 52px; flex: none; }
.app-urgent { filter: drop-shadow(0 0 2px #e08040); }
.trash { margin-top: auto; }
.markers { position: absolute; left: 0; top: 0; }

.window { flex: 1; display: flex; flex-direction: column; background: #f5f5f5; }
.menubar { display: flex; gap: 14.7px; height: 20px; padding: 3px 0 0 10.3px; background: #e5e2dd; border-bottom: 1px solid #cbc8c1; color: #111; }
.menubar u { text-underline-offset: 2px; text-decoration-thickness: 1px; }
.workspace { display: flex; height: 990px; }

.dock { display: flex; flex-direction: column; width: 273px; border-right: 1px solid #b4b6b6; background: #e8e8e8; }
.dock-title { display: flex; align-items: center; justify-content: flex-end; height: 18px; padding-right: 3px; background: linear-gradient(#7d7d7d, #636363); border-bottom: 1px solid #b0b0b0; }
.toolbox { display: flex; height: 787px; border-left: 1px solid #aaa; border-top: 1px solid #b0b0b0; }
.categories { width: 257px; background: #e5e2dd; border-right: 1px solid #aaa; }
.category-open { display: flex; align-items: center; height: 29px; padding-left: 7px; background: linear-gradient(#f6cc9b 60%, #e6be90); border-bottom: 1px solid #aaa; }
.cat-table { width: 24px; height: 24px; }
.categories b { font: bold 13.9px/16px "Liberation Sans", Arial, sans-serif; margin-left: 9px; }
.category-open b { color: #000; font-size: 14.2px; margin-left: 16px; }
.widgets { display: grid; grid-template-columns: repeat(4, 64px); grid-auto-rows: 84px; height: 597px; background: #e8e8e8; border-bottom: 1px solid #aaa; }
.widget { display: flex; flex-direction: column; align-items: center; padding-top: 3px; }
.widget svg { width: 48px; height: 48px; }
.widget span { display: flex; flex-direction: column; justify-content: center; height: 28px; margin-top: 4px; text-align: center; color: #383838; white-space: nowrap; }
.category { display: flex; align-items: center; height: 30px; background: linear-gradient(#e9e9e9 55%, #d5d5d5); border-bottom: 1px solid #aaa; }
.category svg { width: 38px; height: 29px; border-right: 1px solid #aaa; }
.viz { height: 29px; }
.viz svg { height: 28px; background: linear-gradient(#f6b0aa 55%, #e5a19c); }
.model svg { background: linear-gradient(#f0b6d0 55%, #dfa8c2); }
.evaluate svg { background: linear-gradient(#bce9e8 55%, #add9d8); }
.unsup svg { background: linear-gradient(#c2d7e6 55%, #b3c9d8); }
.assoc svg { background: linear-gradient(#c5c564 55%, #b6b657); }
.scrollbar { flex: 1; display: flex; flex-direction: column; justify-content: space-between; background: linear-gradient(90deg, #e3e2df, #f3f2f1); border-right: 1px solid #aaa; }
.scrollbar i { height: 14px; display: flex; align-items: center; justify-content: center; background: #ecebe9; }
.scrollbar i::before { content: ""; border: 4px solid transparent; }
.up { border-bottom: 1px solid #aaa; }
.scrollbar .up::before { border-top: 0; border-bottom-color: #4c4a47; }
.down { border-top: 1px solid #aaa; padding-bottom: 2px; }
.scrollbar .down::before { border-bottom: 0; border-top-color: #4c4a47; }
.splitter { height: 8px; border-top: 2px solid #b0b0b0; border-bottom: 2px solid #aaa; background: #ebebeb; }
.help { height: 149px; padding: 4px; background: #f5f5f5; border-left: 1px solid #aaa; border-right: 1px solid #aaa; border-bottom: 1px solid #aaa; }
.help h1 { margin: 0 0 14px; font-size: 13.9px; line-height: 16px; color: #f5a100; }
.help a { color: #f5a100; text-underline-offset: 2px; }
.toolbar { display: grid; grid-template-columns: 46px 46px 46px 45px 45px 44px; height: 28px; background: linear-gradient(#7b7b7b, #606060); border-bottom: 1px solid #8b8b8b; }
.toolbar span { border-right: 1px solid #969696; }
.toolbar svg { width: 100%; height: 27px; fill: #f2f2f2; }
.toolbar .active { background: #f5a340; border: 0; }

.canvas { background: #f5f5f5; }
.node-label { font-family: "Liberation Sans", Arial, sans-serif; font-size: 12px; text-anchor: middle; fill: #000; }
.link-label { stroke: #000; stroke-width: .15px; }
.node-label .selected { fill: #e9f1f8; }
```
